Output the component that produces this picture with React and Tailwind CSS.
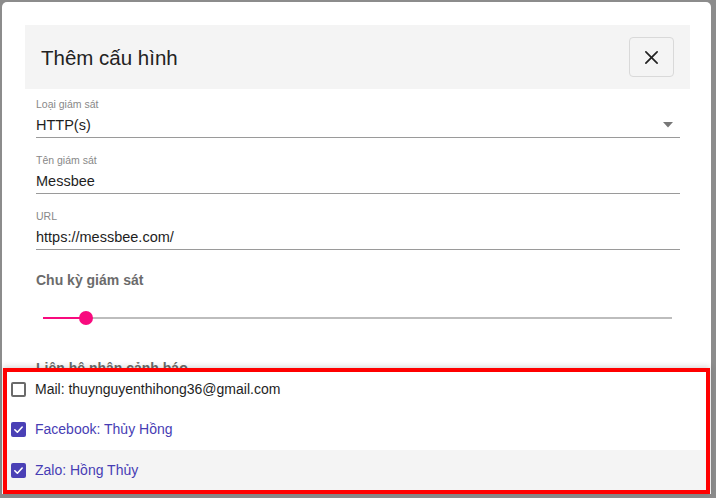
import { useState } from "react";

const fields = [
  { label: "Loại giám sát", value: "HTTP(s)", select: true },
  { label: "Tên giám sát", value: "Messbee" },
  { label: "URL", value: "https://messbee.com/" },
];

const contacts = [
  { text: "Mail: thuynguyenthihong36@gmail.com", checked: false },
  { text: "Facebook: Thủy Hồng", checked: true },
  { text: "Zalo: Hồng Thủy", checked: true },
];

function Checkbox({ checked }) {
  if (!checked) {
    return <span className="w-[15px] h-[15px] rounded-[2px] border-2 border-[#6a6a6a] bg-white shrink-0" />;
  }
  return (
    <span className="w-[15px] h-[15px] rounded-[2px] bg-[#4a40b6] flex items-center justify-center shrink-0">
      <svg width="11" height="11" viewBox="0 0 24 24" fill="none" stroke="white" strokeWidth="3.5" strokeLinecap="round" strokeLinejoin="round">
        <polyline points="4 12.5 9.5 18 20 6.5" />
      </svg>
    </span>
  );
}

export default function App() {
  const [items, setItems] = useState(contacts);

  const toggle = (i) =>
    setItems((prev) => prev.map((c, j) => (j === i ? { ...c, checked: !c.checked } : c)));

  return (
    <div className="relative w-[716px] h-[498px] overflow-hidden bg-[#8c8c8c] pt-[2px] pl-[2px] font-['Liberation_Sans',Arial,sans-serif]">
      <div className="w-[709px] h-[492px] bg-white rounded-t-[5px] pt-[23px] pl-[23px] pr-[21px]">
        <div className="h-[64px] bg-[#f4f4f4] flex items-center justify-between pl-[16px] pr-[16px]">
          <h2 className="text-[20.5px] text-[#222] leading-none mt-[2px]">Thêm cấu hình</h2>
          <button className="w-[45px] h-[40px] border border-[#d9d9d9] rounded-[4px] flex items-center justify-center text-[#222]">
            <svg width="15" height="15" viewBox="0 0 16 16" fill="none" stroke="currentColor" strokeWidth="1.8" strokeLinecap="round">
              <line x1="2" y1="2" x2="14" y2="14" />
              <line x1="14" y1="2" x2="2" y2="14" />
            </svg>
          </button>
        </div>

        <div className="pl-[11px] pr-[10px]">
          {fields.map((f, i) => (
            <div key={f.label} className={`${i === 0 ? "pt-[9px]" : "pt-[16px]"} border-b border-[#9a9a9a] pb-[3px]`}>
              <div className="text-[10.5px] leading-[13px] text-[#888]">{f.label}</div>
              <div className="mt-[5px] flex items-center justify-between">
                <span className="text-[14.5px] leading-[18px] text-[#1e1e1e]">{f.value}</span>
                {f.select && (
                  <svg width="10" height="6" viewBox="0 0 10 6" className="mr-[7px]">
                    <polygon points="0,0 10,0 5,5.5" fill="#777" />
                  </svg>
                )}
              </div>
            </div>
          ))}

          <div className="mt-[22px] text-[14px] leading-[17px] font-bold text-[#6b6b6b]">Chu kỳ giám sát</div>

          <div className="mt-[22px] ml-[7px] mr-[8px] h-[14px] relative flex items-center">
            <div className="h-[2px] w-full bg-[#bdbdbd]" />
            <div className="absolute left-0 top-[6px] h-[2px] w-[43px] bg-[#f80a7e]" />
            <div className="absolute left-[36px] top-0 w-[14px] h-[14px] rounded-full bg-[#f80a7e]" />
          </div>

          <div className="mt-[35px] text-[14px] leading-[17px] font-bold text-[#6b6b6b]">Liên hệ nhận cảnh báo</div>
        </div>
      </div>

      <div className="absolute left-[3px] top-[368px] w-[707px] h-[126px] bg-white border-4 border-[#ff0000] shadow-[0_-1px_6px_rgba(0,0,0,0.18)]">
        {items.map((c, i) => (
          <div
            key={c.text}
            onClick={() => toggle(i)}
            className={`flex items-center gap-[9px] pl-[4px] cursor-pointer ${
              i === 0 ? "h-[37px] pb-[2px]" : i === 1 ? "h-[41px]" : "h-[40px] bg-[#f4f4f4]"
            }`}
          >
            <Checkbox checked={c.checked} />
            <span className={`text-[14px] ${c.checked ? "text-[#473db4]" : "text-[#1e1e1e]"}`}>{c.text}</span>
          </div>
        ))}
      </div>
    </div>
  );
}
